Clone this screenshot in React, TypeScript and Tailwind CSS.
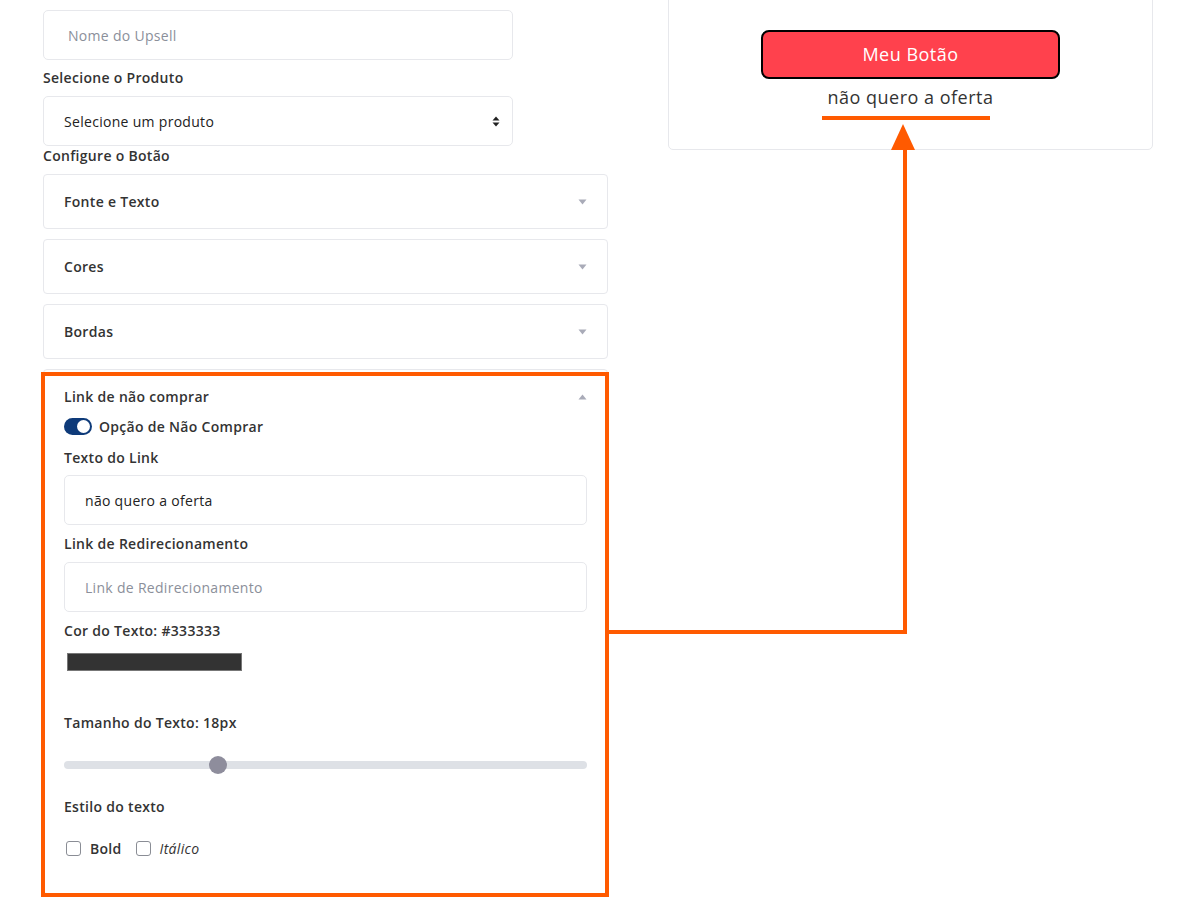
import { useState } from "react";

const font = { fontFamily: '"Open Sans", "Noto Sans", sans-serif' };

function Caret({ up = false }: { up?: boolean }) {
  return (
    <svg width="9" height="6" viewBox="0 0 9 6" className="text-[#a9abb8]">
      {up ? <path d="M4.5 0.5L8.5 5.5H0.5Z" fill="currentColor" /> : <path d="M0.5 0.5H8.5L4.5 5.5Z" fill="currentColor" />}
    </svg>
  );
}

function Accordion({ title }: { title: string }) {
  return (
    <div className="flex h-[55px] items-center justify-between rounded-[4px] border border-[#e7e8ec] bg-white pl-5 pr-[20px]">
      <span className="text-[14px] font-semibold tracking-[0.3px] text-[#333]">{title}</span>
      <Caret />
    </div>
  );
}

function Label({ children, className = "" }: { children: React.ReactNode; className?: string }) {
  return (
    <div className={"text-[14px] leading-[21px] font-semibold tracking-[0.3px] text-[#333] " + className}>{children}</div>
  );
}

function Annotations() {
  return (
    <svg className="pointer-events-none absolute left-0 top-0" width="1198" height="903" viewBox="0 0 1198 903">
      <g stroke="#ff5a00" strokeWidth="4" fill="none">
        <rect x="43" y="374" width="564" height="521" />
        <path d="M609 632H905V148" />
        <path d="M822 118H990" />
      </g>
      <path d="M903 124L915 150H891Z" fill="#ff5a00" />
    </svg>
  );
}

export default function App() {
  const [bold, setBold] = useState(false);
  const [italic, setItalic] = useState(false);

  return (
    <div className="relative h-[903px] w-[1198px] overflow-hidden bg-white" style={font}>
      <div className="flex gap-[60px] pl-[43px]">
        {/* editor column */}
        <div className="flex w-[565px] flex-col">
          <div className="mt-[10px] flex h-[50px] w-[470px] items-center rounded-[5px] border border-[#e7e8ec] pl-6 text-[14px] tracking-[0.3px] text-[#8b8f9a]">
            Nome do Upsell
          </div>
          <Label className="mt-[7px] mb-[8px]">Selecione o Produto</Label>
          <div className="flex h-[50px] w-[470px] items-center justify-between rounded-[5px] border border-[#e7e8ec] pl-5 pr-3 text-[14px] tracking-[0.3px] text-[#222]">
            <span>Selecione um produto</span>
            <svg width="8" height="11" viewBox="0 0 8 11">
              <path d="M4 0.5L7.5 4.5H0.5Z M0.5 6.5H7.5L4 10.5Z" fill="#222" />
            </svg>
          </div>
          <Label className="-mt-[1px] mb-[8px]">Configure o Botão</Label>
          <div className="flex flex-col gap-[10px]">
            <Accordion title="Fonte e Texto" />
            <Accordion title="Cores" />
            <Accordion title="Bordas" />
            <div className="flex h-[525px] flex-col rounded-[4px] border border-[#e7e8ec] bg-white px-5">
              <div className="mt-[16px] flex items-center justify-between">
                <Label>Link de não comprar</Label>
                <Caret up />
              </div>
              <div className="mt-[9px] flex items-center gap-[7px]">
                <span className="relative flex h-[17px] w-[28px] items-center rounded-full bg-[#0e3a79]">
                  <span className="absolute right-[2px] h-[13px] w-[13px] rounded-full bg-white" />
                </span>
                <span className="text-[14px] leading-[21px] font-semibold tracking-[0.3px] text-[#333]">
                  Opção de Não Comprar
                </span>
              </div>
              <Label className="mt-[10px] mb-[7px]">Texto do Link</Label>
              <div className="flex h-[50px] items-center rounded-[5px] border border-[#e7e8ec] pl-5 text-[14px] tracking-[0.3px] text-[#222]">
                não quero a oferta
              </div>
              <Label className="mt-[8px] mb-[8px]">Link de Redirecionamento</Label>
              <div className="flex h-[50px] items-center rounded-[5px] border border-[#e7e8ec] pl-5 text-[14px] tracking-[0.3px] text-[#8b8f9a]">
                Link de Redirecionamento
              </div>
              <Label className="mt-[8px]">Cor do Texto: #333333</Label>
              <div className="mt-[12px] ml-[3px] h-[18px] w-[175px] border border-[#777] bg-[#333333]" />
              <Label className="mt-[41px]">Tamanho do Texto: 18px</Label>
              <div className="relative mt-[23px] flex h-[18px] items-center">
                <div className="h-[8px] w-full rounded-full bg-[#dee1e6]" />
                <div className="absolute left-[145px] h-[18px] w-[18px] rounded-full bg-[#8e8d9c]" />
              </div>
              <Label className="mt-[22px]">Estilo do texto</Label>
              <div className="mt-[21px] flex items-center text-[14px] tracking-[0.3px] text-[#333]">
                <button
                  onClick={() => setBold(!bold)}
                  className="ml-[2px] h-[15px] w-[15px] rounded-[3px] border border-[#8a8d95] bg-white"
                />
                <span className="ml-[9px] font-semibold">Bold</span>
                <button
                  onClick={() => setItalic(!italic)}
                  className="ml-[14px] h-[15px] w-[15px] rounded-[3px] border border-[#8a8d95] bg-white"
                />
                <span className="ml-[9px] italic">Itálico</span>
              </div>
            </div>
          </div>
        </div>

        {/* preview card */}
        <div className="-mt-[20px] flex h-[170px] w-[485px] flex-col items-center rounded-[5px] border border-[#e7e8ec] pt-[49px]">
          <button className="flex h-[49px] w-[299px] items-center justify-center rounded-[8px] border-2 border-black bg-[#ff414d] text-[18px] tracking-[0.5px] text-white">
            Meu Botão
          </button>
          <div className="mt-[6px] text-[18px] leading-[24px] tracking-[0.5px] text-[#333]">não quero a oferta</div>
        </div>
      </div>
      <Annotations />
    </div>
  );
}
